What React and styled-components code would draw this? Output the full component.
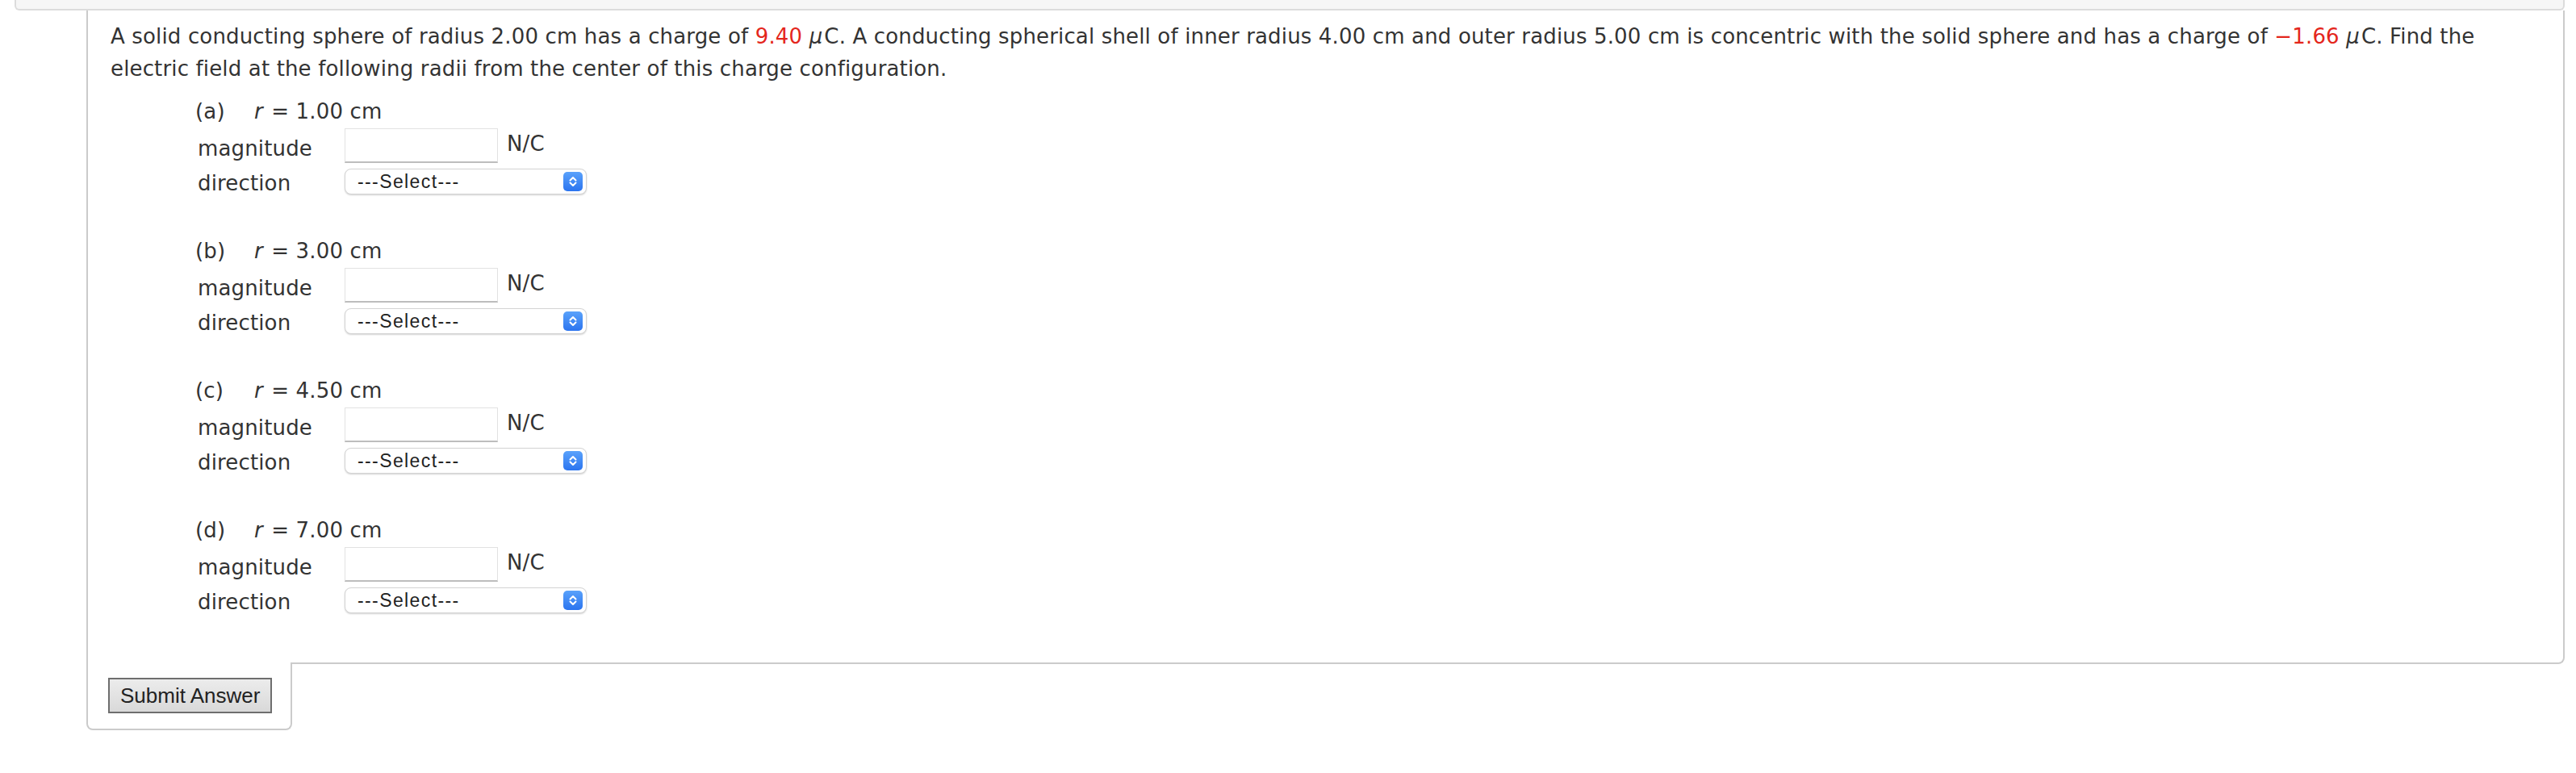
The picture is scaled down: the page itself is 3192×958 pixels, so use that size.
import React from 'react';
import styled, { createGlobalStyle } from 'styled-components';

const GlobalStyle = createGlobalStyle`
    body {
        margin: 0;
        background: #fff;
        font-family: 'DejaVu Sans', Verdana, sans-serif;
        color: #333;
    }
`;

const Page = styled.div`
    width: 3192px;
`;

const TopBar = styled.div`
    height: 11px;
    margin: 0 14px 0 18px;
    background: #f6f6f6;
    border: 2px solid #dcdcdc;
    border-top: none;
    border-radius: 0 0 6px 6px;
`;

const Question = styled.div`
    margin: 0 14px 0 107px;
    padding: 12px 28px 61px 28px;
    border: 2px solid #cbcbcb;
    border-top: none;
    border-radius: 0 0 8px 0;
    background: #fff;
`;

const Prompt = styled.p`
    max-width: 2990px;
    margin: 0 0 13px;
    font-size: 26px;
    line-height: 40px;
    letter-spacing: 0.15px;

    .red {
        color: #e4261c;
    }

    i {
        font-style: italic;
        padding-right: 2px;
    }
`;

const Parts = styled.div`
    display: flex;
    flex-direction: column;
    gap: 50px;
    margin-left: 105px;
`;

const Part = styled.div`
    display: flex;
    flex-direction: column;
`;

const PartTitle = styled.div`
    display: flex;
    height: 40px;
    font-size: 26px;
    line-height: 40px;
    letter-spacing: 0.15px;

    .tag {
        width: 73px;
    }

    i {
        padding-right: 2px;
    }
`;

const Row = styled.div`
    display: flex;
    align-items: center;
    margin-top: ${p => p.$top}px;
    height: ${p => p.$height}px;
    font-size: 26px;
    letter-spacing: 0.15px;
`;

const Label = styled.span`
    width: 185px;
    padding-left: 3px;
    padding-top: ${p => p.$shift || 0}px;
    box-sizing: border-box;
`;

const Field = styled.div`
    width: 190px;
    height: 43px;
    box-sizing: border-box;
    border: 1px solid #e2e2e2;
    border-bottom: 2px solid #bdbdbd;
    background: #fff;
`;

const Unit = styled.span`
    margin-left: 11px;
    margin-top: -6px;
`;

const SelectBox = styled.div`
    display: flex;
    align-items: center;
    justify-content: space-between;
    width: 300px;
    height: 32px;
    box-sizing: border-box;
    padding: 0 4px 0 15px;
    border: 1px solid #d4d4d4;
    border-radius: 8px;
    background: #fff;
    box-shadow: 0 1px 2px rgba(0, 0, 0, 0.18);
    font-family: 'Liberation Sans', Arial, sans-serif;
    font-size: 23px;
    letter-spacing: 1.4px;
    color: #222;
`;

const Stepper = styled.span`
    display: flex;
    align-items: center;
    justify-content: center;
    width: 24px;
    height: 24px;
    border-radius: 5px;
    background: linear-gradient(#5aa2fb, #2b74ef);
`;

const Tab = styled.div`
    width: 255px;
    margin: -2px 0 0 107px;
    padding: 19px 0 19px 25px;
    box-sizing: border-box;
    border: 2px solid #cbcbcb;
    border-top: none;
    border-radius: 0 0 8px 8px;
    background: #fff;
    position: relative;
`;

const SubmitButton = styled.button`
    height: 44px;
    padding: 0 13px;
    border: 2px solid #6e6e6e;
    border-radius: 0;
    background: linear-gradient(#ececec, #d9d9d9);
    font-family: 'Liberation Sans', Arial, sans-serif;
    font-size: 26px;
    color: #222;
    cursor: pointer;
`;

const Chevrons = () => (
    <svg width='24' height='24' viewBox='0 0 24 24' fill='none' stroke='#fff' strokeWidth='2' strokeLinecap='round' strokeLinejoin='round'>
        <path d='M8.5 10.5 L12 7 L15.5 10.5' />
        <path d='M8.5 13.5 L12 17 L15.5 13.5' />
    </svg>
);

const parts = [
    { tag: 'a', r: '1.00' },
    { tag: 'b', r: '3.00' },
    { tag: 'c', r: '4.50' },
    { tag: 'd', r: '7.00' },
];

const App = () => {
    return (
        <>
            <GlobalStyle />
            <Page>
                <TopBar />
                <Question>
                    <Prompt>
                        A solid conducting sphere of radius 2.00 cm has a charge of <span className='red'>9.40</span> <i>μ</i>C. A conducting spherical shell of inner radius 4.00 cm and outer radius 5.00 cm is concentric with the solid sphere and has a charge of <span className='red'>−1.66</span> <i>μ</i>C. Find the electric field at the following radii from the center of this charge configuration.
                    </Prompt>

                    <Parts>
                        {parts.map(p => (
                            <Part key={p.tag}>
                                <PartTitle>
                                    <span className='tag'>({p.tag})</span>
                                    <span><i>r</i> = {p.r} cm</span>
                                </PartTitle>
                                <Row $top={1} $height={43}>
                                    <Label $shift={6}>magnitude</Label>
                                    <Field />
                                    <Unit>N/C</Unit>
                                </Row>
                                <Row $top={7} $height={32}>
                                    <Label $shift={4}>direction</Label>
                                    <SelectBox>
                                        <span>---Select---</span>
                                        <Stepper><Chevrons /></Stepper>
                                    </SelectBox>
                                </Row>
                            </Part>
                        ))}
                    </Parts>
                </Question>
                <Tab>
                    <SubmitButton>Submit Answer</SubmitButton>
                </Tab>
            </Page>
        </>
    );
};

export default App;
